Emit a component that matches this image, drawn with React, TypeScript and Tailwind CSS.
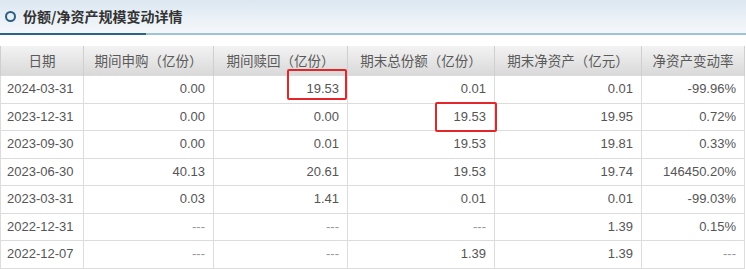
import React from "react";

const headers = ["日期", "期间申购（亿份）", "期间赎回（亿份）", "期末总份额（亿份）", "期末净资产（亿元）", "净资产变动率"];
const widths = ["w-[83px]", "w-[130px]", "w-[134px]", "w-[147px]", "w-[147px]", "w-[103px]"];

const rows: string[][] = [
  ["2024-03-31", "0.00", "19.53", "0.01", "0.01", "-99.96%"],
  ["2023-12-31", "0.00", "0.00", "19.53", "19.95", "0.72%"],
  ["2023-09-30", "0.00", "0.01", "19.53", "19.81", "0.33%"],
  ["2023-06-30", "40.13", "20.61", "19.53", "19.74", "146450.20%"],
  ["2023-03-31", "0.03", "1.41", "0.01", "0.01", "-99.03%"],
  ["2022-12-31", "---", "---", "---", "1.39", "0.15%"],
  ["2022-12-07", "---", "---", "1.39", "1.39", "---"],
];

export default function App() {
  return (
    <div className="w-[746px] h-[269px] overflow-hidden bg-white relative" style={{ fontFamily: '"Liberation Sans", Arial, "Noto Sans CJK SC", sans-serif' }}>
      {/* title bar */}
      <div className="h-[33px] flex items-center pl-[4px] bg-gradient-to-b from-[#dce7f1] to-[#f5f8fb]">
        <span className="w-[11px] h-[11px] rounded-full border-[2px] border-[#2c5f80] mr-[7px] ml-[1px]" />
        <span className="text-[14px] font-bold text-[#333]" style={{ fontFamily: '"Noto Sans CJK SC", sans-serif' }}>份额/净资产规模变动详情</span>
      </div>
      <div className="flex h-[2px]">
        <div className="w-[146px] bg-[#2a6586]" />
        <div className="flex-1 bg-[#9fc4da]" />
      </div>
      <div className="h-[11px]" />

      <table className="border-collapse table-fixed w-[745px] text-[13px] text-[#555]">
        <thead>
          <tr className="h-[29px] bg-gradient-to-b from-[#f3f3f3] to-[#d9d9d9]">
            {headers.map((h, i) => (
              <th key={i} className={`${widths[i]} font-normal text-center text-[13.5px] border-x border-[#cfcfcf] text-[#5a5a5a] p-0`} style={{ fontFamily: '"Noto Sans CJK SC", sans-serif' }}>
                {h}
              </th>
            ))}
          </tr>
        </thead>
        <tbody>
          {rows.map((r, ri) => (
            <tr key={ri} className={ri % 2 === 0 ? "h-[28px]" : "h-[27px]"}>
              {r.map((c, ci) => (
                <td key={ci} className={`border border-[#dcdcdc] p-0 ${ci === 0 ? "text-left pl-[6px]" : "text-right pr-[8px]"} ${c === "---" ? "text-[#999]" : ""}`}>
                  {c}
                </td>
              ))}
            </tr>
          ))}
        </tbody>
      </table>

      {/* highlight boxes */}
      <div className="absolute left-[287px] top-[69px] w-[60px] h-[31px] border-[2px] border-[#e3262a] rounded-[2px]" />
      <div className="absolute left-[435px] top-[102px] w-[62px] h-[30px] border-[2px] border-[#e3262a] rounded-[2px]" />
    </div>
  );
}
